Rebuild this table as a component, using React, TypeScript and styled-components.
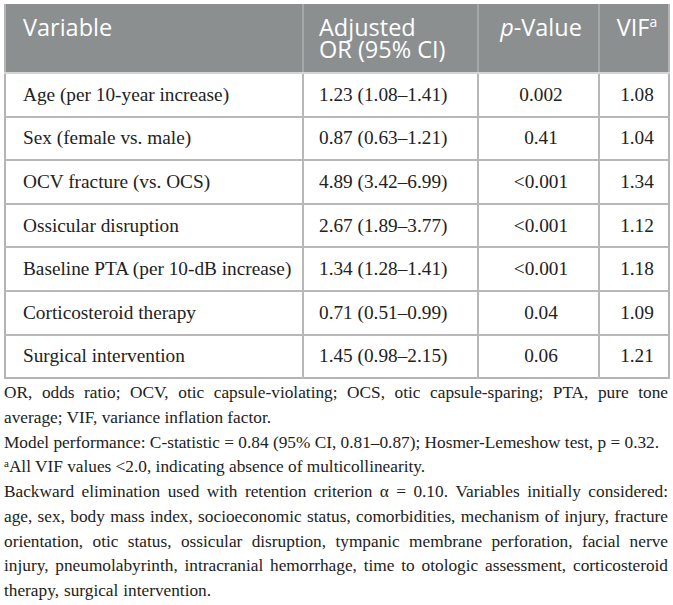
import React from "react";
import styled, { createGlobalStyle } from "styled-components";

const Global = createGlobalStyle`
  html, body { margin: 0; padding: 0; background: #ffffff; }
  body { font-family: "Liberation Serif", "Times New Roman", serif; color: #222; }
`;

const Page = styled.div`
  width: 673px;
  box-sizing: border-box;
  padding: 4px 5px 0 4px;
`;

const Table = styled.table`
  width: 664px;
  border-collapse: collapse;
  table-layout: fixed;
  border: 2px solid #b4b4b4;
  border-top: none;
`;

const HeadRow = styled.tr`
  background: #8b8f90;
`;

const Th = styled.th<{ $align?: "left" | "center" }>`
  font-family: "Open Sans", "Noto Sans", sans-serif;
  font-weight: 400;
  font-size: 23.5px;
  line-height: 22px;
  color: #ffffff;
  text-align: ${(p) => p.$align ?? "left"};
  vertical-align: top;
  padding: 12px 10px 12px 15px;
  height: 44px;
  border-left: 2px solid #a4a8a9;
  border-bottom: 2px solid #d4d6d6;
  &:first-child { border-left: none; padding-left: 17px; }
  &:last-child { padding: 12px 6px 12px 12px; }
  sup { font-size: 14px; vertical-align: top; line-height: 14px; position: relative; top: -1px; }
  em { font-style: italic; }
`;

const Tr = styled.tr`
  border-top: 2px solid #b8b8b8;
  &:first-child { border-top: none; }
`;

const Td = styled.td<{ $align?: "left" | "center" }>`
  font-family: "Liberation Serif", "Times New Roman", serif;
  font-size: 19.3px;
  color: #222;
  height: 41.6px;
  padding: 0 10px 0 15px;
  text-align: ${(p) => p.$align ?? "left"};
  vertical-align: middle;
  border-left: 2px solid #b8b8b8;
  &:first-child { border-left: none; padding-left: 17px; }
  &:last-child { padding: 0 6px 0 12px; }
`;

const Notes = styled.div`
  font-family: "Liberation Serif", "Times New Roman", serif;
  font-size: 17.3px;
  line-height: 24.75px;
  color: #222;
  padding: 2px 0 0 0;
  width: 664px;
  box-sizing: border-box;
`;

const Note = styled.p<{ $wordSpacing?: number }>`
  margin: 0;
  text-align: justify;
  word-spacing: ${(p) => p.$wordSpacing ?? 0}px;
  sup { font-size: 11px; vertical-align: top; line-height: 11px; position: relative; top: 3px; }
`;

const rows: [string, string, string, string][] = [
  ["Age (per 10-year increase)", "1.23 (1.08–1.41)", "0.002", "1.08"],
  ["Sex (female vs. male)", "0.87 (0.63–1.21)", "0.41", "1.04"],
  ["OCV fracture (vs. OCS)", "4.89 (3.42–6.99)", "<0.001", "1.34"],
  ["Ossicular disruption", "2.67 (1.89–3.77)", "<0.001", "1.12"],
  ["Baseline PTA (per 10-dB increase)", "1.34 (1.28–1.41)", "<0.001", "1.18"],
  ["Corticosteroid therapy", "0.71 (0.51–0.99)", "0.04", "1.09"],
  ["Surgical intervention", "1.45 (0.98–2.15)", "0.06", "1.21"],
];

export default function App() {
  return (
    <Page>
      <Global />
      <Table>
        <colgroup>
          <col style={{ width: 298 }} />
          <col style={{ width: 175 }} />
          <col style={{ width: 121 }} />
          <col style={{ width: 70 }} />
        </colgroup>
        <thead>
          <HeadRow>
            <Th>Variable</Th>
            <Th>Adjusted<br />OR (95% CI)</Th>
            <Th $align="center"><em>p</em>-Value</Th>
            <Th $align="center">VIF<sup>a</sup></Th>
          </HeadRow>
        </thead>
        <tbody>
          {rows.map((r) => (
            <Tr key={r[0]}>
              <Td>{r[0]}</Td>
              <Td>{r[1]}</Td>
              <Td $align="center">{r[2]}</Td>
              <Td $align="center">{r[3]}</Td>
            </Tr>
          ))}
        </tbody>
      </Table>
      <Notes>
        <Note>
          OR, odds ratio; OCV, otic capsule-violating; OCS, otic capsule-sparing; PTA, pure tone average; VIF, variance inflation factor.
        </Note>
        <Note>
          Model performance: C-statistic = 0.84 (95% CI, 0.81–0.87); Hosmer-Lemeshow test, p = 0.32.
        </Note>
        <Note>
          <sup>a</sup>All VIF values &lt;2.0, indicating absence of multicollinearity.
        </Note>
        <Note $wordSpacing={0.6}>
          Backward elimination used with retention criterion α = 0.10. Variables initially considered: age, sex, body mass index, socioeconomic status, comorbidities, mechanism of injury, fracture orientation, otic status, ossicular disruption, tympanic membrane perforation, facial nerve injury, pneumolabyrinth, intracranial hemorrhage, time to otologic assessment, corticosteroid therapy, surgical intervention.
        </Note>
      </Notes>
    </Page>
  );
}
